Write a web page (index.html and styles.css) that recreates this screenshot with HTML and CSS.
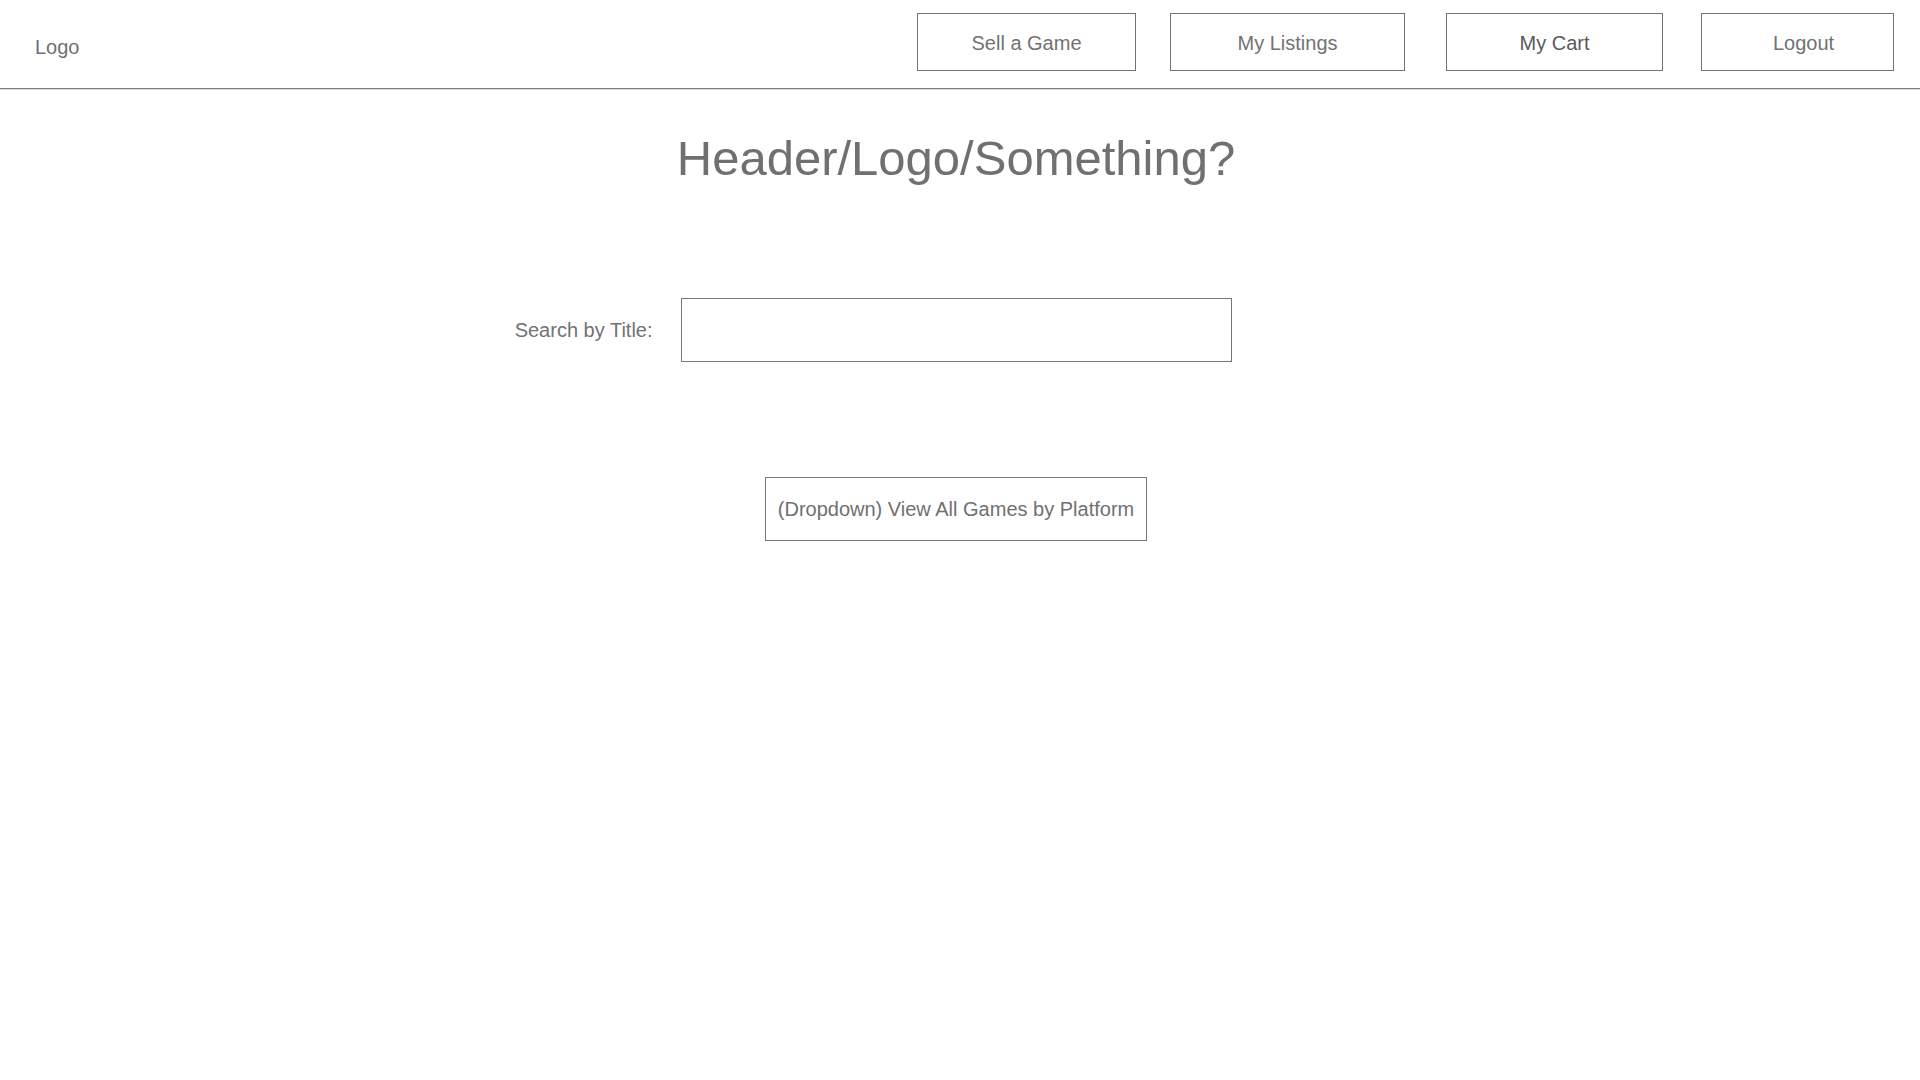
FILE: index.html
```html
<!DOCTYPE html>
<html lang="en">
<head>
<meta charset="utf-8">
<title>Game Marketplace</title>
<link rel="stylesheet" href="styles.css">
</head>
<body>
<header class="topbar">
  <div class="logo">Logo</div>
  <nav class="nav">
    <a class="nav-btn nav-sell">Sell a Game</a>
    <a class="nav-btn nav-listings">My Listings</a>
    <a class="nav-btn nav-cart">My Cart</a>
    <a class="nav-btn nav-logout">Logout</a>
  </nav>
</header>
<main class="main">
  <h1 class="title">Header/Logo/Something?</h1>
  <div class="search-row">
    <label class="search-label" for="search">Search by Title:</label>
    <input class="search-input" id="search" type="text">
    <span class="search-spacer"></span>
  </div>
  <div class="dropdown-row">
    <div class="dropdown">(Dropdown) View All Games by Platform</div>
  </div>
</main>
</body>
</html>
```
FILE: styles.css
```css
html, body {
  margin: 0;
  padding: 0;
  background: #ffffff;
}

body {
  font-family: "Liberation Sans", Arial, Helvetica, sans-serif;
  color: #707070;
  font-size: 20px;
}

.topbar {
  display: flex;
  justify-content: space-between;
  align-items: flex-start;
  height: 89px;
  padding: 13px 26px 0 35px;
  box-sizing: border-box;
  border-bottom: 1px solid #7c7c7c;
  box-shadow: 0 1px 0 #d8d8d8;
}

.logo {
  margin-top: 23px;
  line-height: 23px;
}

.nav {
  display: flex;
}

.nav-btn {
  display: flex;
  align-items: center;
  justify-content: center;
  height: 58px;
  box-sizing: border-box;
  border: 1px solid #737373;
  color: #727272;
  text-decoration: none;
  line-height: 23px;
  padding-top: 2px;
}

.nav-sell {
  width: 219px;
}

.nav-listings {
  width: 235px;
  margin-left: 34px;
}

.nav-cart {
  width: 217px;
  margin-left: 41px;
  color: #5a5a5a;
}

.nav-logout {
  width: 193px;
  margin-left: 38px;
  padding-left: 12px;
}

.main {
  padding-right: 8px;
}

.title {
  margin: 41px 0 0 0;
  font-size: 49px;
  font-weight: normal;
  line-height: 56px;
  text-align: center;
  color: #707070;
}

.search-row {
  display: grid;
  grid-template-columns: 1fr auto 1fr;
  align-items: center;
  margin-top: 112px;
}

.search-label {
  justify-self: end;
  margin-right: 28px;
  line-height: 23px;
  color: #727272;
}

.search-input {
  width: 551px;
  height: 64px;
  box-sizing: border-box;
  border: 1px solid #777777;
  margin: 0;
  padding: 0 12px;
  font: inherit;
  outline: none;
  background: #ffffff;
}

.dropdown-row {
  display: flex;
  justify-content: center;
  margin-top: 115px;
}

.dropdown {
  width: 382px;
  height: 64px;
  box-sizing: border-box;
  border: 1px solid #777777;
  display: flex;
  align-items: center;
  justify-content: center;
  line-height: 23px;
  color: #707070;
  white-space: nowrap;
}
```
